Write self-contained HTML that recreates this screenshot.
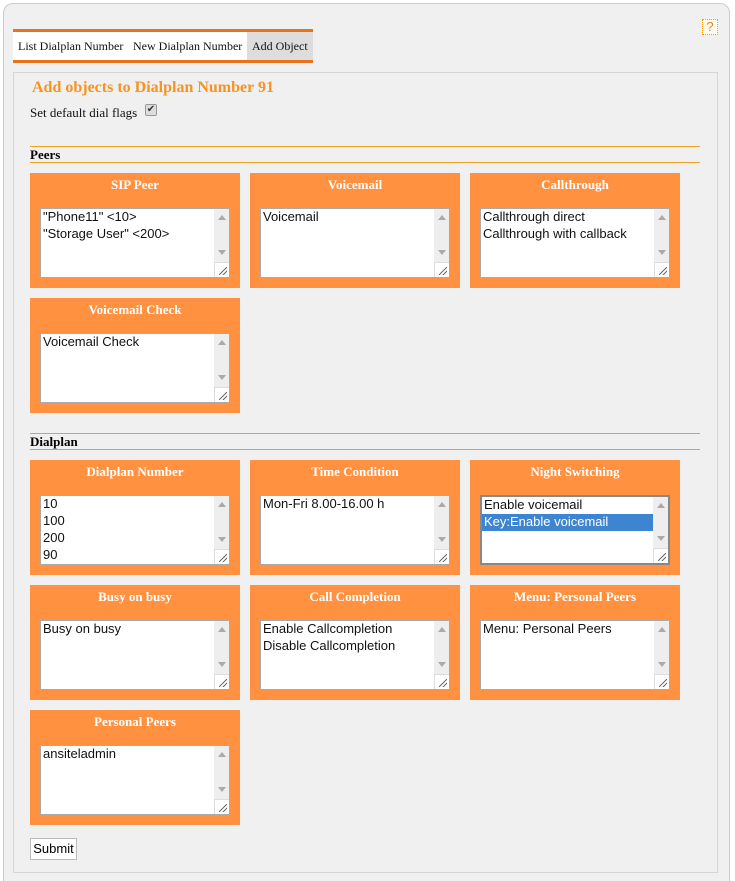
<!DOCTYPE html>
<html><head><meta charset="utf-8"><style>
*{margin:0;padding:0;box-sizing:border-box}
html,body{width:735px;height:881px;overflow:hidden}
body{background:#fff;position:relative;font-family:"Liberation Serif",serif;}
.outer{position:absolute;left:3px;top:3px;width:727px;height:890px;background:#f0f0f0;border:1px solid #ccc;border-radius:10px}
.help{position:absolute;left:702px;top:19px;width:16px;height:16px;border:1px dotted #f90;color:#e67e22;font:13px "Liberation Sans",sans-serif;text-align:center;line-height:14px;background:#fbfbef}
.tabs{position:absolute;left:13px;top:29px;width:300px;height:34px;border-top:3px solid #e8731c;border-bottom:3px solid #e8731c;background:#fff;font-size:12px;color:#111}
.tabs span{position:absolute;top:0;height:28px;line-height:28px}
.inner{position:absolute;left:13px;top:72px;width:705px;height:801px;border:1px solid #d5d5d5;background:#f0f0f0}
.h1{position:absolute;left:32px;top:79px;color:#f7931e;font-weight:bold;font-size:16px}
.flag{position:absolute;left:30px;top:105px;font-size:13px;color:#111}
.cb{position:absolute;left:145px;top:104px;width:12px;height:12px;border:1px solid #999;border-radius:2px;background:#ddd;font:10px "DejaVu Sans",sans-serif;line-height:10px;text-align:center;color:#333}
.sec{position:absolute;left:30px;width:670px;height:17px;border-top:1px solid #f0a020;border-bottom:1px solid #f0a020;font-weight:bold;font-size:13px;line-height:15px;color:#000}
.box{position:absolute;width:210px;height:115px;background:#ff9140}
.box .t{position:absolute;top:4px;left:0;width:100%;text-align:center;color:#fff;font-weight:bold;font-size:13px}
.sel{position:absolute;left:10px;top:35px;width:190px;height:70px;background:#fff;border:1px solid #aaa;font:13px "Liberation Sans",sans-serif;color:#111;overflow:hidden}
.sel.dk{border:2px solid #888}
.sel div{height:17px;line-height:15px;padding-left:2px;white-space:nowrap}
.sel .hl{background:#3d85d0;color:#fff;width:174px}
.sb{position:absolute;right:0;top:0;width:15px;height:100%;background:#eee}
.sb:before{content:"";position:absolute;left:4px;top:6px;border:4px solid transparent;border-bottom:5px solid #aaa;border-top:0}
.sb:after{content:"";position:absolute;left:4px;bottom:22px;border:4px solid transparent;border-top:5px solid #aaa;border-bottom:0}
.rz{position:absolute;right:0;bottom:0;width:15px;height:15px;background:#fff;border-left:1px solid #ddd;border-top:1px solid #ddd}
.rz:after{content:"";position:absolute;right:2px;bottom:2px;width:8px;height:8px;background:linear-gradient(135deg,transparent 45%,#666 47%,#666 53%,transparent 55%,transparent 70%,#666 72%,#666 78%,transparent 80%)}
.btn{position:absolute;left:30px;top:838px;width:47px;height:22px;border:1px solid #bbb;background:#fff;font:13px "Liberation Sans",sans-serif;line-height:20px;text-align:center;color:#000}
</style></head><body>
<div class="outer"></div>
<div class="help">?</div>
<div class="tabs"><span style="left:5px">List Dialplan Number</span><span style="left:120px">New Dialplan Number</span><span style="left:234px;width:66px;background:#ddd;padding-left:5px">Add Object</span></div>
<div class="inner"></div>
<div class="h1">Add objects to Dialplan Number 91</div>
<div class="flag">Set default dial flags</div>
<div class="cb">✔</div>
<div class="sec" style="top:146px">Peers</div>

<div class="box" style="left:30px;top:173px"><div class="t">SIP Peer</div><div class="sel"><div>"Phone11" &lt;10&gt;</div><div>"Storage User" &lt;200&gt;</div><span class="sb"></span><span class="rz"></span></div></div>
<div class="box" style="left:250px;top:173px"><div class="t">Voicemail</div><div class="sel"><div>Voicemail</div><span class="sb"></span><span class="rz"></span></div></div>
<div class="box" style="left:470px;top:173px"><div class="t">Callthrough</div><div class="sel"><div>Callthrough direct</div><div>Callthrough with callback</div><span class="sb"></span><span class="rz"></span></div></div>
<div class="box" style="left:30px;top:298px"><div class="t">Voicemail Check</div><div class="sel"><div>Voicemail Check</div><span class="sb"></span><span class="rz"></span></div></div>

<div class="sec" style="top:433px">Dialplan</div>

<div class="box" style="left:30px;top:460px"><div class="t">Dialplan Number</div><div class="sel"><div>10</div><div>100</div><div>200</div><div>90</div><span class="sb"></span><span class="rz"></span></div></div>
<div class="box" style="left:250px;top:460px"><div class="t">Time Condition</div><div class="sel"><div>Mon-Fri 8.00-16.00 h</div><span class="sb"></span><span class="rz"></span></div></div>
<div class="box" style="left:470px;top:460px"><div class="t">Night Switching</div><div class="sel dk"><div>Enable voicemail</div><div class="hl">Key:Enable voicemail</div><span class="sb"></span><span class="rz"></span></div></div>
<div class="box" style="left:30px;top:585px"><div class="t">Busy on busy</div><div class="sel"><div>Busy on busy</div><span class="sb"></span><span class="rz"></span></div></div>
<div class="box" style="left:250px;top:585px"><div class="t">Call Completion</div><div class="sel"><div>Enable Callcompletion</div><div>Disable Callcompletion</div><span class="sb"></span><span class="rz"></span></div></div>
<div class="box" style="left:470px;top:585px"><div class="t">Menu: Personal Peers</div><div class="sel"><div>Menu: Personal Peers</div><span class="sb"></span><span class="rz"></span></div></div>
<div class="box" style="left:30px;top:710px"><div class="t">Personal Peers</div><div class="sel"><div>ansiteladmin</div><span class="sb"></span><span class="rz"></span></div></div>

<div class="btn">Submit</div>
</body></html>
